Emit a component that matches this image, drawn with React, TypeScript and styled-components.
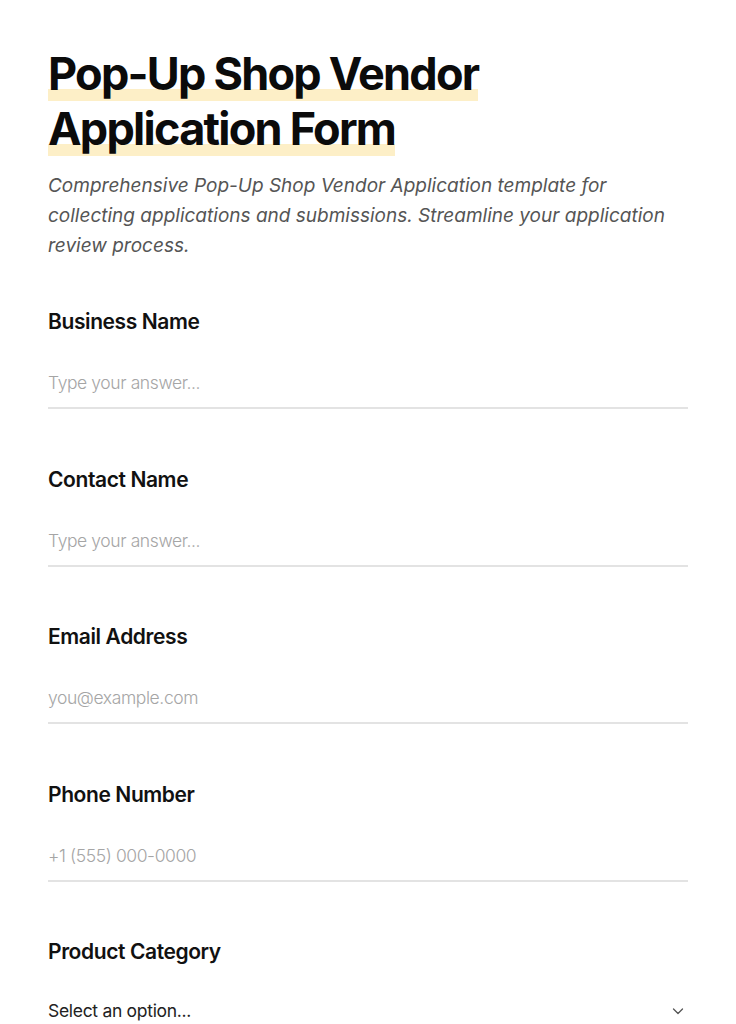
import React from "react";
import styled, { createGlobalStyle } from "styled-components";

const Global = createGlobalStyle`
  html, body { margin: 0; padding: 0; background: #ffffff; }
  body { font-family: Inter, "Noto Sans", sans-serif; color: #111; }
  * { box-sizing: border-box; }
`;

const Page = styled.main`
  padding: 46px 48px 0 48px;
  width: 736px;
`;

const Title = styled.h1`
  margin: 0;
  font-family: Inter, sans-serif;
  font-weight: 700;
  font-size: 45px;
  line-height: 55px;
  letter-spacing: -1.75px;
  color: #0b0b0b;
  max-width: 460px;
`;

const Highlight = styled.span`
  background-image: linear-gradient(
    to bottom,
    transparent 0,
    transparent 43px,
    #fdefc7 43px,
    #fdefc7 56px
  );
  background-size: 100% 55px;
  box-decoration-break: clone;
  -webkit-box-decoration-break: clone;
`;

const Description = styled.p`
  margin: 15px 0 0 0;
  font-style: italic;
  font-size: 19px;
  line-height: 30px;
  color: #555;
  letter-spacing: 0;
  font-weight: 400;
`;

const Form = styled.form`
  display: flex;
  flex-direction: column;
  gap: 56.5px;
  margin-top: 47px;
`;

const Field = styled.div`
  display: flex;
  flex-direction: column;
`;

const Label = styled.label`
  font-weight: 600;
  font-size: 21px;
  line-height: 28px;
  letter-spacing: -0.4px;
  color: #111;
`;

const Input = styled.input`
  margin-top: 35px;
  border: none;
  border-bottom: 2px solid #e3e3e3;
  outline: none;
  padding: 0 0 12px 0;
  font-family: Inter, sans-serif;
  font-size: 17.5px;
  line-height: 24px;
  color: #111;
  background: transparent;
  font-weight: 300;
  letter-spacing: -0.4px;
  &::placeholder { color: #a5a5a5; }
`;

const SelectBox = styled.div`
  margin-top: 33px;
  display: flex;
  align-items: center;
  justify-content: space-between;
  padding: 0 2px 12px 0;
  border-bottom: 2px solid #e3e3e3;
`;

const SelectText = styled.span`
  font-size: 17.5px;
  line-height: 24px;
  color: #222;
  letter-spacing: -0.3px;
  font-weight: 400;
`;

const Chevron = () => (
  <svg width="16" height="16" viewBox="0 0 16 16" fill="none">
    <path d="M3.5 6l4.5 4.5L12.5 6" stroke="#555" strokeWidth="1.3" strokeLinecap="round" strokeLinejoin="round" />
  </svg>
);

const fields = [
  { label: "Business Name", placeholder: "Type your answer...", type: "text" },
  { label: "Contact Name", placeholder: "Type your answer...", type: "text" },
  { label: "Email Address", placeholder: "you@example.com", type: "email" },
  { label: "Phone Number", placeholder: "+1 (555) 000-0000", type: "tel" },
];

export default function App() {
  return (
    <>
      <Global />
      <Page>
        <Title>
          <Highlight>Pop-Up Shop Vendor Application Form</Highlight>
        </Title>
        <Description>
          Comprehensive Pop-Up Shop Vendor Application template for collecting applications and
          submissions. Streamline your application review process.
        </Description>
        <Form onSubmit={(e) => e.preventDefault()}>
          {fields.map((f) => (
            <Field key={f.label}>
              <Label>{f.label}</Label>
              <Input type={f.type} placeholder={f.placeholder} />
            </Field>
          ))}
          <Field>
            <Label>Product Category</Label>
            <SelectBox>
              <SelectText>Select an option...</SelectText>
              <Chevron />
            </SelectBox>
          </Field>
        </Form>
      </Page>
    </>
  );
}
